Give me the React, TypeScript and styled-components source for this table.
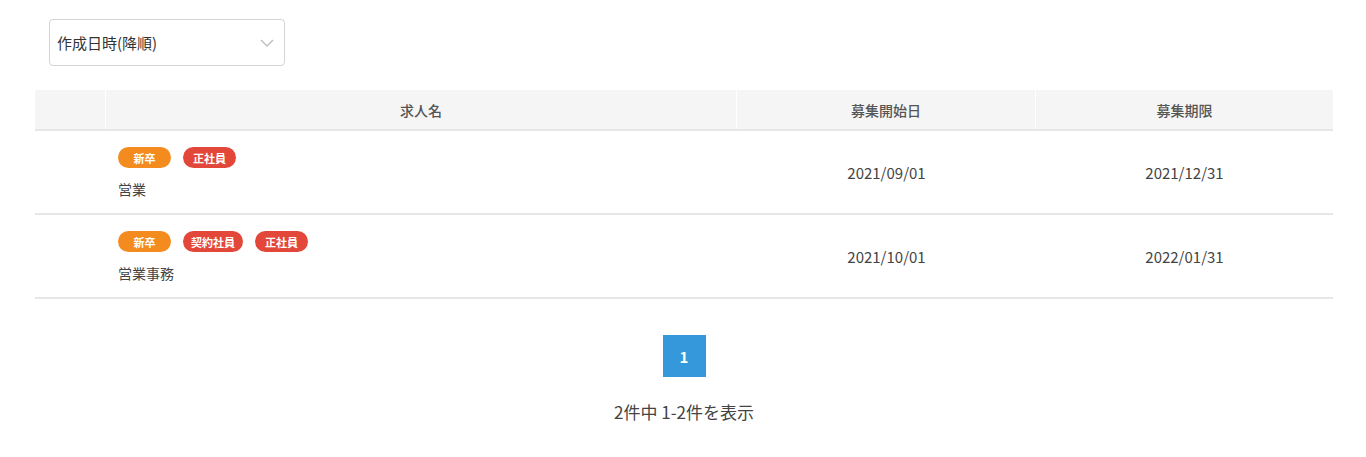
import React from "react";
import styled, { createGlobalStyle } from "styled-components";

const GlobalStyle = createGlobalStyle`
  html, body {
    margin: 0;
    padding: 0;
    background: #ffffff;
    font-family: "Noto Sans CJK JP", "Noto Sans", sans-serif;
    color: #333;
  }
  * { box-sizing: border-box; }
`;

const Page = styled.div`
  padding: 19px 33px 0 35px;
`;

const SelectBox = styled.div`
  width: 236px;
  height: 47px;
  margin-left: 14px;
  border: 1px solid #d4d4d4;
  border-radius: 4px;
  display: flex;
  align-items: center;
  justify-content: space-between;
  padding: 0 10px 0 7px;
  font-size: 15px;
  color: #333;
`;

const Table = styled.div`
  margin-top: 24px;
  width: 1298px;
`;

const Grid = styled.div`
  display: grid;
  grid-template-columns: 71px 631px 299px 297px;
`;

const HeadRow = styled(Grid)`
  height: 41px;
  border-bottom: 2px solid #e6e6e6;
`;

const HeadCell = styled.div<{ $last?: boolean }>`
  background: #f5f5f5;
  border-right: ${(p) => (p.$last ? "none" : "1px solid #ffffff")};
  display: flex;
  align-items: center;
  justify-content: center;
  font-size: 14px;
  font-weight: 500;
  color: #555;
`;

const BodyRow = styled(Grid)`
  border-bottom: 2px solid #e6e6e6;
`;

const NameCell = styled.div`
  padding: 16px 12px 14px;
`;

const Tags = styled.div`
  display: flex;
  gap: 12px;
`;

const Tag = styled.span<{ $color: string }>`
  display: inline-flex;
  align-items: center;
  justify-content: center;
  min-width: 53px;
  height: 21px;
  padding: 0 8px;
  border-radius: 11px;
  background: ${(p) => p.$color};
  color: #fff;
  font-size: 11px;
  font-weight: 700;
`;

const JobName = styled.div`
  margin-top: 11px;
  font-size: 14px;
  line-height: 20px;
  color: #444;
`;

const DateCell = styled.div`
  display: flex;
  align-items: center;
  justify-content: center;
  font-size: 15px;
  color: #444;
`;

const Pager = styled.div`
  display: flex;
  flex-direction: column;
  align-items: center;
  margin-top: 36px;
`;

const PageButton = styled.div`
  width: 43px;
  height: 42px;
  background: #3598db;
  color: #fff;
  display: flex;
  align-items: center;
  justify-content: center;
  font-size: 15px;
  font-weight: 700;
`;

const Summary = styled.div`
  margin-top: 24px;
  font-size: 17px;
  color: #444;
  line-height: 22px;
`;

const ORANGE = "#f38b1f";
const RED = "#e2473a";

const jobs = [
  {
    tags: [
      { label: "新卒", color: ORANGE },
      { label: "正社員", color: RED },
    ],
    name: "営業",
    start: "2021/09/01",
    end: "2021/12/31",
  },
  {
    tags: [
      { label: "新卒", color: ORANGE },
      { label: "契約社員", color: RED },
      { label: "正社員", color: RED },
    ],
    name: "営業事務",
    start: "2021/10/01",
    end: "2022/01/31",
  },
];

const Chevron = () => (
  <svg width="14" height="8" viewBox="0 0 14 8" fill="none">
    <path d="M1 1l6 6 6-6" stroke="#bdbdbd" strokeWidth="1.4" />
  </svg>
);

export default function App() {
  return (
    <Page>
      <GlobalStyle />
      <SelectBox>
        <span>作成日時(降順)</span>
        <Chevron />
      </SelectBox>

      <Table>
        <HeadRow>
          <HeadCell />
          <HeadCell>求人名</HeadCell>
          <HeadCell>募集開始日</HeadCell>
          <HeadCell $last>募集期限</HeadCell>
        </HeadRow>
        {jobs.map((job) => (
          <BodyRow key={job.name}>
            <div />
            <NameCell>
              <Tags>
                {job.tags.map((t) => (
                  <Tag key={t.label} $color={t.color}>{t.label}</Tag>
                ))}
              </Tags>
              <JobName>{job.name}</JobName>
            </NameCell>
            <DateCell>{job.start}</DateCell>
            <DateCell>{job.end}</DateCell>
          </BodyRow>
        ))}
      </Table>

      <Pager>
        <PageButton>1</PageButton>
        <Summary>2件中 1-2件を表示</Summary>
      </Pager>
    </Page>
  );
}
